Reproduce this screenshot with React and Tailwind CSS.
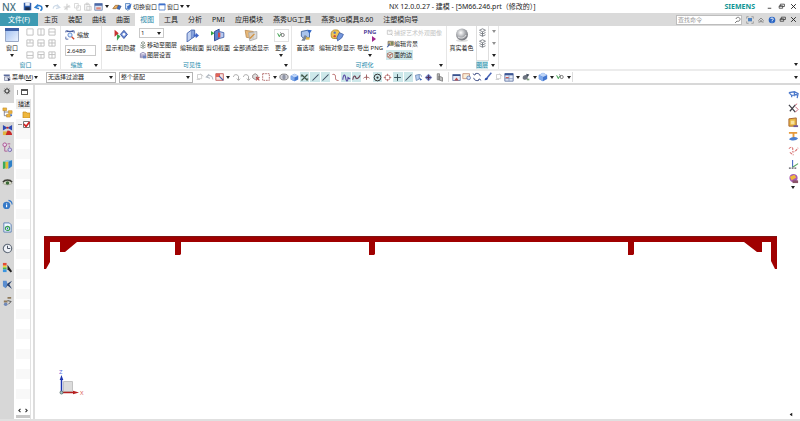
import clsx from "clsx";

// Small line/shape icons, all drawn on a 12x12 grid
const glyphs = {
  save: (
    <>
      <path d="M1 1h9l1 1v9H1z" fill="#2c5aa8" />
      <path d="M3 1h6v4H3z" fill="#e8eef8" />
      <path d="M3 7h6v4H3z" fill="#1d2c4a" />
    </>
  ),
  undo: <path d="M2 6.500C5 3 9.500 4 9.500 7.500c0 1.500-1 2.500-2 2.500M5 3 1.500 6.500 6 8" fill="none" stroke="#2f7fd0" strokeWidth="1.800" />,
  undoPale: <path d="M2 6C5 3 9 4 9.500 9M5 2.500 1.500 6 6 7.500" fill="none" stroke="#b5bcc4" strokeWidth="1.300" />,
  redoPale: <path d="M10 6.500C7 3 3 4 2.500 8M7 3l3.500 3.500L6 8" fill="none" stroke="#cfdbe8" strokeWidth="1.500" />,
  cut: <path d="M2 6h8M6 2v8M3 9l6-5" fill="none" stroke="#cfcfcf" strokeWidth="1.400" />,
  copy: <path d="M2 2h5v6H2zM5 5h5v6H5z" fill="#fff" stroke="#cfcfcf" />,
  paste: <path d="M2 3h7v8H2zM4 1.500h3v2H4zM5 6h6v5H5z" fill="#f5f5f5" stroke="#cacaca" />,
  table: (
    <>
      <path d="M1 2h10v9H1z" fill="#dce6f5" stroke="#6379a8" />
      <path d="M1 2h10v3H1z" fill="#4a69a8" />
      <path d="M3 7h6v3H3z" fill="#e08a7c" />
    </>
  ),
  eraser: (
    <>
      <path d="m1 8 3-4h4L5 8z" fill="#f0b060" stroke="#9d7038" />
      <path d="M6 8l2-4 3 1-2 4z" fill="#3e6ec2" stroke="#27406f" strokeWidth=".6" />
    </>
  ),
  switchWin: (
    <>
      <path d="M2 2h6v7H2z" fill="#dbe7f8" stroke="#4678b8" />
      <path d="m4 6 6-4-1 5-4 3z" fill="#3d70c6" />
      <path d="M2 9l3 2 3-2" fill="none" stroke="#4678b8" />
    </>
  ),
  win: (
    <>
      <path d="M1.500 1.500h9v9h-9z" fill="#fff" stroke="#4a78c8" strokeWidth="1.200" />
      <path d="M1 1h10v2.500H1z" fill="#3f70cc" />
    </>
  ),
  zoomFit: (
    <>
      <path d="M1 3V1h3M8 1h3v3M1 8v3h3" fill="none" stroke="#465a9c" />
      <path d="M2 1h8v1.500H2z" fill="#465a9c" />
      <circle cx="6" cy="6" r="2.500" fill="#dff0ff" stroke="#4d78c8" />
      <path d="m8 8 3 3" stroke="#d0452c" strokeWidth="1.600" />
    </>
  ),
  showHide: (
    <>
      <path d="M.5 1.500v6L4 4.500z" fill="#c93232" />
      <path d="M2.500 5v6l3-4z" fill="#39a050" />
      <path d="m8.500 2 3 3.500-3 3.500-3-3.500z" fill="#6f8fd8" stroke="#3b55a0" strokeWidth=".8" />
      <circle cx="8.500" cy="5.500" r="1.200" fill="#fff" />
    </>
  ),
  moveLayer: <path d="m3 3 3-2 3 2-3 2zM2 6l4 2 4-2M2 9l4 2 4-2M6 5v5" fill="none" stroke="#5d6e5e" />,
  layerSet: (
    <>
      <path d="M2 4l4-2 4 2v6H2z" fill="#e7e5f5" stroke="#71699d" />
      <path d="M2 6h8M2 8h8" stroke="#71699d" />
      <path d="M6 7h5v4H6z" fill="#6e83bf" />
    </>
  ),
  section: (
    <>
      <path d="M1 4l4-3v8l-4 3z" fill="#c2d2f2" stroke="#3c5da8" strokeWidth=".8" />
      <path d="M5 1h3v6L5 9" fill="#87a3dd" stroke="#3c5da8" strokeWidth=".8" />
      <path d="M7 5h2V3.500L12 6 9 8.500V7H7z" fill="#4166c8" />
    </>
  ),
  clip: (
    <>
      <path d="M3 3l4-2v8l-4 2z" fill="#5e80cf" stroke="#2d488f" strokeWidth=".8" />
      <path d="M7 3l4 1v4l-4 1z" fill="#b8caf0" stroke="#4766ad" strokeWidth=".8" />
      <path d="M0 2.500l3 2-3 2z" fill="#38a447" />
      <path d="M6 4h2v4H6z" fill="#d04848" />
    </>
  ),
  seeThru: (
    <>
      <path d="M1 2l7 1v6L2 8z" fill="#e8b878" stroke="#b98c54" strokeWidth=".7" />
      <path d="M4 4l7-1v6l-6 2z" fill="#d3d3d3" fillOpacity=".8" stroke="#a5a5a5" strokeWidth=".7" />
      <path d="m5 9 4-4" stroke="#d18f39" />
    </>
  ),
  glasses: (
    <>
      <path d="M2 4l2 4 1.500-3" fill="none" stroke="#3a9f4b" strokeWidth="1.200" />
      <circle cx="8" cy="6" r="1.900" fill="none" stroke="#666" />
      <path d="m5 3 2 2" stroke="#555" />
    </>
  ),
  prefs: (
    <>
      <path d="M2 3l5-1 2 2v4l-5 1-2-2z" fill="#a9c4ec" stroke="#45689f" strokeWidth=".8" />
      <path d="M7 1.500 11 2l-2 3z" fill="#2f66c6" />
      <path d="m5 6-3 5h3l2-4z" fill="#7b8794" />
      <path d="M6 8h3v2H6z" fill="#e2b440" />
    </>
  ),
  editDisp: (
    <>
      <path d="M1 5c0-3 3-4 6-3l2 3-3 4H3C1 9 1 7 1 5z" fill="#f0c552" stroke="#a98022" strokeWidth=".7" />
      <circle cx="4" cy="4" r="1" fill="#4a73c6" />
      <circle cx="4" cy="7" r="1" fill="#cf4a3a" />
      <path d="m8 4 3.500 1.500L10 8.500 6.500 11 6 8z" fill="#7396dc" stroke="#3e5fa7" strokeWidth=".7" />
    </>
  ),
  capture: <path d="M2 2h7v6H2zM7 7l3 3M4 4h3" fill="none" stroke="#b7b7b7" />,
  editBg: (
    <>
      <path d="M3 2h8v6H3z" fill="#c9b27d" stroke="#6b675c" />
      <path d="m1 11 4-6 1 1-3 5z" fill="#3b5da9" />
      <path d="M8 3h2v4H8z" fill="#567b4f" />
    </>
  ),
  faceEdge: (
    <>
      <path d="M2 4l4-2 4 2v5l-4 2-4-2z" fill="#dbeeee" stroke="#a35a4a" />
      <path d="m2 4 4 2 4-2M6 6v5" fill="none" stroke="#a35a4a" />
      <path d="m3 9 5-5" stroke="#c44b38" />
    </>
  ),
  layers: <path d="m6 1 4 2-4 2-4-2zM2 6l4 2 4-2M2 9l4 2 4-2M6 5v6" fill="none" stroke="#6c7178" strokeWidth="1.100" />,
  menu: (
    <>
      <path d="M1 2h8v2H1z" fill="#5a6b9d" />
      <path d="M2 5h7v5H2z" fill="#e0e4f0" stroke="#79809d" />
      <path d="m6 6 4 3-2 .5L7 11z" fill="#333c5d" />
    </>
  ),
  pale: <path d="M3 3h5v5H3zM2 9h4M6 2l4 3" fill="none" stroke="#c9c9c9" />,
  snapSel: (
    <>
      <path d="M1 2h9v8H1z" fill="#fbe3de" stroke="#bd5656" />
      <path d="M1 2h5v4H1z" fill="#e06458" />
      <path d="m5 5 5 5" stroke="#4663b4" strokeWidth="1.500" />
    </>
  ),
  hook: <path d="M3 6c0-3 4-4 6-1v5M7 8l2 2 2-2" fill="none" stroke="#a9a9a9" strokeWidth="1.200" />,
  pick: (
    <>
      <path d="m2 4 3-2 3 2v3L5 9 2 7z" fill="#dedede" stroke="#8a7c7c" />
      <path d="m6 6 4 4M10 6l-4 4" stroke="#b84848" strokeWidth="1.300" />
    </>
  ),
  marquee: <path d="M2 2h8v8H2z" fill="none" stroke="#a85a5a" strokeDasharray="2 1" />,
  disc: (
    <>
      <ellipse cx="6" cy="6" rx="5" ry="3.500" fill="#d0d0d8" stroke="#777" />
      <ellipse cx="6" cy="6" rx="2" ry="3" fill="#8e94a5" />
    </>
  ),
  cube: (
    <>
      <path d="m6 1 5 2.500v5L6 11 1 8.500v-5z" fill="#4276cf" />
      <path d="m6 1 5 2.500L6 6 1 3.500z" fill="#bed5f8" />
      <path d="M6 6v5L1 8.500v-5z" fill="#7ea8ea" />
    </>
  ),
  star: <path d="M2 2l4 4 4-4M2 10l4-4 4 4M1 4h4M7 8h4" fill="none" stroke="#3f5547" strokeWidth="1.500" />,
  line: <path d="m2 10 8-8" stroke="#38485d" strokeWidth="1.400" />,
  curve: <path d="M2 2c4-1 4 2 4 4s0 4 4 4" fill="none" stroke="#a84c4c" strokeWidth="1.200" />,
  wave: <path d="M1 9c1-8 3-8 4-2s3 4 3-1l3 2" fill="none" stroke="#584aa4" strokeWidth="1.500" />,
  wave2: <path d="M1 9c1-6 3-6 4-3s4 1 6-3" fill="none" stroke="#6d4456" strokeWidth="1.500" />,
  plusUp: <path d="M6 2v7M2 7c1-2 7-2 8 0" fill="none" stroke="#9a5757" strokeWidth="1.200" />,
  target: (
    <>
      <circle cx="6" cy="6" r="4.500" fill="none" stroke="#333" strokeWidth="1.300" />
      <circle cx="6" cy="6" r="1.500" fill="#333" />
    </>
  ),
  ring: (
    <>
      <circle cx="6" cy="6" r="3.500" fill="none" stroke="#b26464" />
      <path d="M6 1v3M6 8v3M1 6h3M8 6h3" stroke="#b26464" />
    </>
  ),
  plus: <path d="M6 1.500v9M1.500 6h9" stroke="#39525a" strokeWidth="1.300" />,
  faceSnap: (
    <>
      <path d="M2 3l5-1v6l-4 2z" fill="#bcd1f2" stroke="#5e7dac" />
      <path d="M7 6l4 3-3 1z" fill="#3a66b6" />
      <path d="M7 2c2 0 3 1 3 3" fill="none" stroke="#5e7dac" />
    </>
  ),
  diamond: (
    <>
      <path d="m6 1 5 5-5 5-5-5z" fill="#7280c0" />
      <path d="M6 3v6M3 6h6" stroke="#502c56" strokeWidth="1.300" />
    </>
  ),
  stack: <path d="M3 1h3v8H3zM5 4l5 2v5l-5-2z" fill="#c0c0c0" stroke="#737373" />,
  grid: (
    <>
      <path d="M1 2h10v8H1z" fill="#e6edf9" stroke="#596e9e" />
      <path d="M1 2h10v2H1z" fill="#38528f" />
      <path d="M3 10l3-4 3 4z" fill="#bb4f4f" />
    </>
  ),
  winZoom: (
    <>
      <path d="M1 2h8v6H1z" fill="#fbeed7" stroke="#c28b73" />
      <circle cx="8" cy="7" r="2.200" fill="#d7e5fb" stroke="#6076b0" />
    </>
  ),
  rotate: <path d="M10 5a4 4 0 0 0-7-2M2 7a4 4 0 0 0 7 2M1 2l2 1.500L5 2M11 10 9 8.500 7 10" fill="none" stroke="#4c5a8d" strokeWidth="1.200" />,
  brush: (
    <>
      <path d="M10 1 5 7" stroke="#4763b5" strokeWidth="1.800" />
      <path d="M2 10c0-3 2-4 4-3 0 2-1 3-4 3z" fill="#2d4ba5" />
    </>
  ),
  tableRed: (
    <>
      <path d="M1 2h10v9H1z" fill="#e6edf9" stroke="#596e9e" />
      <path d="M1 1.500h10v2.500H1z" fill="#3d5796" />
      <path d="M2 6h4v2H2z" fill="#d26058" />
      <path d="M6 4v7M1 8h10" stroke="#8b9cc4" />
    </>
  ),
  clock3d: (
    <>
      <path d="M2 7c0-3 3-4 6-3v4c-2 2-6 2-6-1z" fill="#6d7480" />
      <path d="M6 2l4 1-2 3z" fill="#3f4a5a" />
      <path d="M7 8h3v2H7z" fill="#7b9e7a" />
    </>
  ),
  gear: (
    <>
      <circle cx="6" cy="6" r="3" fill="none" stroke="#444" strokeWidth="1.700" />
      <path d="M6 1v2M6 9v2M1 6h2M9 6h2M2.500 2.500l1.300 1.300M8.200 8.200l1.300 1.300M9.500 2.500 8.200 3.800M3.800 8.200 2.500 9.500" stroke="#444" />
    </>
  ),
  partNav: (
    <>
      <path d="M1 1h4v3H1zM7 4h4v3H7zM5 8h4v3H5z" fill="#eeb63c" stroke="#bd8522" strokeWidth=".6" />
      <path d="M2.500 4v5.500H5M2.500 5.500H7" fill="none" stroke="#667" strokeWidth=".8" />
      <path d="M9 8h2v2H9z" fill="#4677c7" />
    </>
  ),
  asmNav: (
    <>
      <path d="m1 0 5 3-5 3zM11 0 6 3l5 3z" fill="#2b48b3" />
      <path d="M1 7h5v4H1z" fill="#e1b640" />
      <path d="M6 6c3 0 5 2 5 5H4z" fill="#c82828" />
      <path d="M5 2h2v2H5z" fill="#c82828" />
    </>
  ),
  constraint: (
    <>
      <circle cx="3" cy="3" r="2" fill="#ead7ee" stroke="#a8508e" />
      <circle cx="8.500" cy="8.500" r="2" fill="#d6d6f2" stroke="#7768b0" />
      <path d="M3 5v5h3M6 2h3M8 4v2" fill="none" stroke="#a8508e" strokeWidth=".9" />
    </>
  ),
  books: (
    <>
      <path d="m1 3 3-1v8l-3 1z" fill="#3caa59" />
      <path d="m4 3 3-1v8l-3 1z" fill="#e2bd36" />
      <path d="m7 2 4-1v7l-4 3z" fill="#2f80c8" />
      <path d="m1 3 4-2 6 0-4 2z" fill="#9cc8dc" />
    </>
  ),
  eye: (
    <>
      <path d="M1 7c2-4 8-4 10 0-3 2-7 2-10 0z" fill="#e3e6d4" stroke="#8c8c80" strokeWidth=".6" />
      <circle cx="6" cy="6.500" r="2" fill="#3c6a38" />
      <path d="M1 5.500c2-3 8-3 10 0" fill="none" stroke="#3d3d35" strokeWidth="1.600" />
    </>
  ),
  info: (
    <>
      <circle cx="5" cy="7" r="4" fill="#3579c8" />
      <path d="M5 6v3M5 4.500v.8" stroke="#fff" strokeWidth="1.300" />
      <path d="M7 1.500c2.500.5 4 2 4 4.500" fill="none" stroke="#3579c8" strokeWidth="1.200" />
    </>
  ),
  page: (
    <>
      <path d="M2 1h6l2 2v8H2z" fill="#eef5ff" stroke="#5a7fb4" />
      <circle cx="6" cy="7" r="2.300" fill="none" stroke="#399e52" strokeWidth="1.300" />
      <path d="M6 6v2" stroke="#2f6bbd" strokeWidth="1.200" />
    </>
  ),
  clock: (
    <>
      <circle cx="6" cy="6" r="4.600" fill="#eef1f6" stroke="#606a78" strokeWidth="1.200" />
      <path d="M6 3v3h3" fill="none" stroke="#3c4658" />
    </>
  ),
  palette: (
    <>
      <path d="M1 1h4v3H1z" fill="#e34b36" />
      <path d="M1 4h4v2H1z" fill="#f3d436" />
      <path d="M1 6h4v2H1z" fill="#46ba4b" />
      <path d="M1 8h4v3H1z" fill="#3a94df" />
      <path d="m6 3 5 7-1.500 1.500L6 8z" fill="#222" />
    </>
  ),
  tools: (
    <>
      <path d="M1 2h4l1 4-2 4-3-2z" fill="#5a8dd0" />
      <path d="m6 5 5-3-3 4 3 5-5-4-2 3z" fill="#29406b" />
    </>
  ),
  flow: (
    <>
      <path d="M6 1h4v2H6zM2 5h4v2H2z" fill="#8f7a5a" />
      <circle cx="4" cy="9" r="2" fill="#7089b8" />
      <path d="m6 5 4 1-3 3" fill="none" stroke="#4d4d4d" />
    </>
  ),
  viewA: <path d="M1 4l6-1 4 2-1 5M1 4l3 3 6-1M4 7v2M7 3v5" fill="none" stroke="#4c79cb" strokeWidth="1.400" />,
  viewB: (
    <>
      <path d="m1 2 7 8M8 2 2 9" stroke="#3f3f47" strokeWidth="1.300" />
      <path d="m8 4 3 3-3 3M8 2l2-1" fill="none" stroke="#c85c70" />
    </>
  ),
  viewC: (
    <>
      <path d="M1 2l8-1v9H1z" fill="#e8b643" stroke="#a5602c" />
      <path d="M3 4h4v4H3z" fill="#f8e2a0" />
      <path d="M6 9h5v2H6z" fill="#6d599e" />
    </>
  ),
  viewD: (
    <>
      <path d="M1 1h9v2H1zM5 3h2v5H5z" fill="#e59a3d" />
      <path d="M1 9c3-3 7-3 10-1-2 3-7 3-10 1z" fill="#4b7fd2" />
    </>
  ),
  viewE: <path d="M1 4c3-3 5-1 4 2S8 8 11 3M2 8l4 3" fill="none" stroke="#d97676" strokeWidth="1.200" strokeDasharray="3 1" />,
  viewF: (
    <>
      <path d="M5 1v8" stroke="#4b6cc8" strokeWidth="1.200" />
      <path d="m5 9 6-4" stroke="#55a45f" strokeWidth="1.200" />
      <path d="M1 10h9" stroke="#55555f" strokeWidth="1.300" strokeDasharray="2 1" />
    </>
  ),
  viewG: (
    <>
      <circle cx="6" cy="5.500" r="4.500" fill="#a75cb6" />
      <path d="M2 4l5-2 2 3-5 3z" fill="#efb93a" />
      <path d="M5 8h6v3H5z" fill="#8a5368" />
    </>
  ),
  screen: (
    <>
      <path d="M1 1h3M8 1h3M1 11h3M8 11h3M1 1v3M11 1v3M1 8v3M11 8v3" stroke="#888" />
      <path d="M3 3h6v5H3z" fill="#4e82be" />
    </>
  ),
  hat: <path d="m2 7 4-4 4 4M2 9h3V7h2v2h3" fill="none" stroke="#777" strokeWidth="1.200" />,
  help: (
    <>
      <circle cx="6" cy="6" r="5" fill="#2b66c4" />
      <path d="M4 4.500C4 2.500 8 2.500 8 4.500S6 6 6 7.500M6 8.500v1" fill="none" stroke="#fff" strokeWidth="1.400" />
    </>
  ),
  restore: <path d="M4 5V2h7v4H8M2 5h6v4H2zM2 5.500h6" fill="none" stroke="#333" strokeWidth="1.300" />,
  close: <path d="m2 2 8 8M10 2l-8 8" stroke="#222" strokeWidth="1.600" />,
  minimize: <path d="M3 9h6" stroke="#333" strokeWidth="1.500" />,
  search: <path d="M7 2a3 3 0 1 1-1 5.500L3 10.500M4.500 4.500A3 3 0 0 1 7 2" fill="none" stroke="#666" strokeWidth="1.300" />,
};

const Icon = ({ name, className = "size-[10px]" }) => (
  <svg viewBox="0 0 12 12" className={clsx("shrink-0", className)} aria-hidden="true">
    {glyphs[name]}
  </svg>
);

const Caret = ({ className }) => (
  <svg viewBox="0 0 4 3" className={clsx("h-[3px] w-[4px] shrink-0", className)} aria-hidden="true">
    <path d="M0 0h4L2 3z" fill="#222" />
  </svg>
);

const IconButton = ({ name, label, className = "w-[10px]", size }) => (
  <button aria-label={label || name} className={clsx("flex shrink-0 items-center justify-center", className)}>
    {name === "caret" ? <Caret /> : <Icon name={name} className={size} />}
  </button>
);

const TitleBar = () => (
  <header className="flex h-[13px] items-center">
    <div className="flex w-[389px] shrink-0 items-center">
      <span className="w-[22px] pl-[2px] text-[10px] leading-[12px] font-medium text-[#48717f]">NX</span>
      <IconButton name="save" label="保存" size="size-[9px]" />
      <IconButton name="undo" label="撤消" className="ml-px w-[11px]" />
      <IconButton name="caret" label="撤消列表" className="w-[6px]" />
      <IconButton name="redoPale" label="重做" className="w-[11px]" />
      <IconButton name="cut" label="剪切" className="ml-px w-[10px]" />
      <IconButton name="copy" label="复制" size="size-[9px]" />
      <IconButton name="paste" label="粘贴" size="size-[9px]" />
      <IconButton name="table" label="表格" className="ml-px w-[10px]" size="size-[9px]" />
      <IconButton name="caret" label="表格列表" className="w-[7px]" />
      <IconButton name="eraser" label="橡皮" className="ml-px w-[12px]" />
      <button className="flex items-center">
        <Icon name="switchWin" className="ml-px size-[9px]" />
        切换窗口
      </button>
      <button className="ml-px flex items-center">
        <Icon name="win" className="mr-px size-[8px]" />
        窗口
        <Caret className="ml-px" />
      </button>
      <IconButton name="caret" label="自定义" className="w-[8px]" />
    </div>
    <h1 className="text-[7px] whitespace-nowrap">NX 12.0.0.27 - 建模 - [5M66.246.prt（修改的）]</h1>
    <div className="ml-auto flex items-center">
      <span className="mr-[8px] font-['Noto_Sans'] text-[7px] font-bold text-[#0e9494]">SIEMENS</span>
      <IconButton name="minimize" label="最小化" className="w-[12px]" size="size-[7px]" />
      <IconButton name="restore" label="还原" className="w-[12px]" size="size-[7px]" />
      <IconButton name="close" label="关闭" className="w-[13px]" size="size-[7px]" />
    </div>
  </header>
);

const tabs = ["主页", "装配", "曲线", "曲面", "视图", "工具", "分析", "PMI", "应用模块", "燕秀UG工具", "燕秀UG模具8.60", "注塑模向导"];

const TabBar = () => (
  <nav className="flex h-[13px] items-stretch bg-[#dadada] text-[7px]">
    <button className="mr-px w-[38px] bg-[#3d9ab2] text-white">文件(F)</button>
    {tabs.map((tab) => (
      <button
        key={tab}
        className={clsx("px-[5px] whitespace-nowrap", tab === "视图" && "bg-white text-[#1e86a6]")}
      >
        {tab}
      </button>
    ))}
    <div className="ml-auto flex items-center">
      <label className="mr-[3px] flex h-[10px] w-[66px] items-center border border-[#bdbdbd] bg-white">
        <input aria-label="查找命令" placeholder="查找命令" className="w-full min-w-0 pl-px text-[6px] placeholder:text-[#999]" />
        <Icon name="search" className="size-[8px]" />
      </label>
      <IconButton name="screen" label="全屏" size="size-[8px]" />
      <IconButton name="hat" label="最小化功能区" className="w-[12px]" size="size-[8px]" />
      <IconButton name="help" label="帮助" size="size-[8px]" />
      <IconButton name="restore" label="还原窗口" size="size-[7px]" />
      <IconButton name="close" label="关闭窗口" className="w-[13px]" size="size-[7px]" />
    </div>
  </nav>
);

const Group = ({ label, className, children }) => (
  <section className={clsx("flex shrink-0 flex-col border-r border-[#e6e6e6]", className)}>
    <div className="flex h-[35px]">{children}</div>
    <div className="relative flex h-[8px] items-center justify-center pr-[9px] text-[#2389aa]">
      {label}
      <Caret className="absolute right-[3px]" />
    </div>
  </section>
);

const BigButton = ({ label, className, caret, children }) => (
  <button className={clsx("flex shrink-0 flex-col items-center pt-[2px] whitespace-nowrap", className)}>
    <span className="mb-[2px] flex h-[14px] items-center justify-center">{children}</span>
    <span>{label}</span>
    {caret && <Caret className="mt-[2px]" />}
  </button>
);

const layouts = ["", "M4.500 1v7", "M1 4.500h7", "M1 4.500h7M4.500 1v3", "M1 4.500h7M4.500 4v4", "M1 4.500h7M4.500 1v7", "M1 5h7", "M1 4h7M4.500 4v4", "M1 4h7M4.500 1v7"];

const Ribbon = () => (
  <div className="flex h-[45px] border-b-2 border-[#ececec]">
    <Group label="窗口" className="w-[61px]">
      <BigButton label="窗口" caret className="w-[24px]">
        <svg viewBox="0 0 14 14" className="size-[14px]">
          <defs>
            <linearGradient id="pane" x1="0" y1="0" x2="1" y2="1">
              <stop offset="0" stopColor="#9dbdf0" />
              <stop offset="1" stopColor="#eef4ff" />
            </linearGradient>
          </defs>
          <path d="M.5.5h13v13H.5z" fill="url(#pane)" stroke="#9aa9c6" />
          <path d="M0 0h14v3H0z" fill="#3d5fa6" />
        </svg>
      </BigButton>
      <div className="grid w-[33px] grid-cols-3 items-center justify-items-center">
        {layouts.map((d, i) => (
          <button key={i} aria-label={`布局 ${i + 1}`}>
            <svg viewBox="0 0 9 9" className="size-[8px]">
              <path d={`M1 1h7v7H1z${d}`} fill="none" stroke="#bcbcbc" />
            </svg>
          </button>
        ))}
      </div>
    </Group>

    <Group label="缩放" className="w-[41px]">
      <div className="flex flex-col gap-[5px] pt-[4px] pl-[4px]">
        <button className="flex items-center gap-[2px]">
          <Icon name="zoomFit" />
          缩放
        </button>
        <input aria-label="缩放" defaultValue="2.6489" className="h-[11px] w-[31px] border border-[#c9c9c9] pl-px" />
      </div>
    </Group>

    <Group label="可见性" className="w-[190px]">
      <BigButton label="显示和隐藏" className="w-[37px]">
        <Icon name="showHide" className="size-[14px]" />
      </BigButton>
      <div className="w-[40px] pt-[2px]">
        <div className="relative mb-[3px] flex w-[25px] items-center">
          <select aria-label="工作图层" className="h-[10px] w-full appearance-none border border-[#c9c9c9] bg-white pl-px">
            <option>1</option>
          </select>
          <Caret className="absolute right-[3px]" />
        </div>
        <button className="mb-[2px] flex items-center whitespace-nowrap">
          <Icon name="moveLayer" className="size-[8px]" />
          移动至图层
        </button>
        <button className="flex items-center whitespace-nowrap">
          <Icon name="layerSet" className="size-[8px]" />
          图层设置
        </button>
      </div>
      <BigButton label="编辑截面" className="w-[26px]">
        <Icon name="section" className="size-[13px]" />
      </BigButton>
      <BigButton label="剪切截面" className="w-[26px]">
        <Icon name="clip" className="size-[14px]" />
      </BigButton>
      <BigButton label="全部通透显示" className="w-[40px]">
        <Icon name="seeThru" className="size-[14px]" />
      </BigButton>
      <BigButton label="更多" caret className="w-[20px]">
        <span className="flex h-[13px] w-[15px] items-center justify-center border border-[#e2e2e2]">
          <Icon name="glasses" />
        </span>
      </BigButton>
    </Group>

    <Group label="可视化" className="w-[155px]">
      <BigButton label="首选项" className="w-[27px]">
        <Icon name="prefs" className="size-[14px]" />
      </BigButton>
      <BigButton label="编辑对象显示" className="w-[36px]">
        <Icon name="editDisp" className="size-[14px]" />
      </BigButton>
      <BigButton label="导出 PNG" caret className="w-[30px]">
        <span className="flex flex-col items-end text-[6px] leading-[7px] font-bold text-[#54449a]">
          PNG
          <svg viewBox="0 0 4 6" className="h-[6px] w-[4px]">
            <path d="M0 0v6l4-3z" fill="#a0288c" />
          </svg>
        </span>
      </BigButton>
      <div className="flex flex-col items-start gap-[2px] pt-[2px] pl-px whitespace-nowrap">
        <button disabled className="flex h-[9px] items-center text-[#c4c4c4]">
          <Icon name="capture" className="size-[8px]" />
          捕捉艺术外观图像
        </button>
        <button className="flex h-[9px] items-center">
          <Icon name="editBg" className="size-[8px]" />
          编辑背景
        </button>
        <button className="flex h-[10px] items-center bg-[#cfe8ea] pr-px">
          <Icon name="faceEdge" className="size-[8px]" />
          面的边
        </button>
      </div>
    </Group>

    <section className="flex w-[52px] shrink-0 border-r border-[#e6e6e6]">
      <BigButton label="真实着色" className="w-[29px]">
        <svg viewBox="0 0 14 14" className="size-[14px]">
          <defs>
            <radialGradient id="ball" cx=".4" cy=".35" r=".65">
              <stop offset="0" stopColor="#fff" />
              <stop offset=".5" stopColor="#b4b6ba" />
              <stop offset="1" stopColor="#74767c" />
            </radialGradient>
          </defs>
          <ellipse cx="7" cy="12.500" rx="6" ry="1.300" fill="#dedede" />
          <circle cx="7" cy="6.500" r="6" fill="url(#ball)" />
          <path d="M3 9c3 2 7 1 8-2" fill="none" stroke="#e8e8ea" />
        </svg>
      </BigButton>
      <div className="flex flex-col">
        <div className="flex h-[35px]">
          <div className="flex w-[13px] flex-col items-center gap-[2px] border border-t-0 border-[#dedede] pt-[2px]">
            <IconButton name="layers" label="图层复制" size="size-[9px]" />
            <IconButton name="layers" label="图层移动" size="size-[9px]" />
          </div>
          <div className="flex w-[9px] flex-col items-center justify-around">
            <Caret className="opacity-50" />
            <Caret className="opacity-50" />
            <Caret />
          </div>
        </div>
        <div className="flex h-[8px] items-center text-[#2389aa]">
          <span className="bg-[#d3ecee]">图层</span>
          <Caret className="ml-[3px]" />
        </div>
      </div>
    </section>
    <Caret className="mt-auto mr-[2px] mb-[3px] ml-auto" />
  </div>
);

const FilterSelect = ({ label, value, className }) => (
  <div className={clsx("relative flex shrink-0 items-center", className)}>
    <select aria-label={label} className="h-[11px] w-full appearance-none border border-[#b4b4b4] bg-white pl-px">
      <option>{value}</option>
    </select>
    <Caret className="absolute right-[3px]" />
  </div>
);

const snapTools = [
  { icon: "star", on: true },
  { icon: "line", on: true },
  { icon: "line", on: true },
  { icon: "curve" },
  { icon: "wave", on: true },
  { icon: "wave2", on: true },
  { icon: "plusUp" },
  { icon: "target", on: true },
  { icon: "ring" },
  { icon: "plus", on: true },
  { icon: "line", on: true },
  { icon: "faceSnap" },
  { icon: "diamond" },
  { icon: "stack" },
];

const dropTools = ["tableRed", "clock3d", "cube", "glasses"];

const SelectionBar = () => (
  <div className="flex h-[14px] items-center border-b-2 border-[#d8d8d8]">
    <button className="mr-[6px] ml-[3px] flex w-[37px] shrink-0 items-center whitespace-nowrap">
      <Icon name="menu" className="size-[9px]" />
      菜单(<u>M</u>)
      <Caret className="ml-px" />
    </button>
    <FilterSelect label="选择过滤器" value="无选择过滤器" className="mr-[3px] w-[70px]" />
    <FilterSelect label="选择范围" value="整个装配" className="mr-[2px] w-[74px]" />
    <IconButton name="pale" label="类型" />
    <IconButton name="undoPale" label="返回" />
    <IconButton name="snapSel" label="选择" />
    <IconButton name="caret" label="选择列表" className="w-[6px]" />
    <IconButton name="hook" label="向上" />
    <IconButton name="hook" label="向下" />
    <IconButton name="pick" label="取消选择" />
    <IconButton name="marquee" label="矩形" />
    <IconButton name="caret" label="矩形列表" className="w-[7px]" />
    <IconButton name="disc" label="高亮" className="w-[11px]" />
    <IconButton name="cube" label="实体" size="size-[9px]" />
    <div className="mr-[3px] ml-px flex h-[10px] w-[145px] shrink-0 items-stretch">
      {snapTools.map((tool, i) => (
        <button
          key={i}
          aria-label={`捕捉点 ${i + 1}`}
          className={clsx("flex flex-1 items-center justify-center border-r border-white", tool.on && "bg-[#cde8ea]")}
        >
          <Icon name={tool.icon} className="size-[9px]" />
        </button>
      ))}
    </div>
    <div className="flex h-[10px] shrink-0 items-center border-x border-[#dedede] pl-[2px]">
      <IconButton name="grid" label="适合窗口" size="size-[9px]" />
      <IconButton name="winZoom" label="缩放窗口" className="w-[11px]" />
      <IconButton name="rotate" label="旋转" />
      <IconButton name="brush" label="着色" className="w-[11px]" />
      <IconButton name="pale" label="平移" className="w-[11px]" />
      {dropTools.map((tool) => (
        <button key={tool} aria-label={tool} className="flex w-[17px] items-center gap-[2px]">
          <Icon name={tool} />
          <Caret />
        </button>
      ))}
    </div>
    <Caret className="mr-[2px] ml-auto" />
  </div>
);

const railItems = [
  { icon: "gear", h: "h-[18px]", size: "size-[8px]" },
  { icon: "partNav", h: "h-[19px]", active: true },
  { icon: "asmNav", h: "h-[16px]" },
  { icon: "constraint", h: "h-[18px]" },
  { icon: "books", h: "h-[17px]" },
  { icon: "eye", h: "h-[19px]" },
  { icon: "info", h: "h-[24px]" },
  { icon: "page", h: "h-[22px]" },
  { icon: "clock", h: "h-[21px]" },
  { icon: "palette", h: "h-[17px]" },
  { icon: "tools", h: "h-[17px]" },
  { icon: "flow", h: "h-[17px]" },
];

const ResourceBar = () => (
  <aside className="flex w-[14px] shrink-0 flex-col bg-[#d7d7d7]">
    {railItems.map(({ icon, h, active, size = "size-[11px]" }) => (
      <button
        key={icon}
        aria-label={icon}
        className={clsx("flex shrink-0 items-center justify-center", h, active && "bg-white", icon === "gear" && "pb-[7px]")}
      >
        <Icon name={icon} className={size} />
      </button>
    ))}
  </aside>
);

const Navigator = () => (
  <aside className="flex w-[21px] shrink-0 flex-col border-r-2 border-[#dcdcdc]">
    <div className="flex h-[14px] items-center gap-[3px] pl-[3px]">
      <span className="h-[5px] border-l border-[#aaa]" />
      <span className="h-[6px] w-[7px] border border-t-2 border-[#555]" />
    </div>
    <div className="mr-[2px] ml-[2px] flex flex-1 flex-col border-r border-[#e2e2e2]">
      <div className="h-[10px] overflow-hidden bg-[#ececec] pl-[2px] leading-[10px] whitespace-nowrap">描述</div>
      <div className="flex h-[10px] items-center justify-end">
        <svg viewBox="0 0 8 7" className="h-[7px] w-[8px]">
          <path d="M1 1h3l1 1h3v5H1z" fill="#efb73d" stroke="#c48a21" strokeWidth=".7" />
        </svg>
      </div>
      <label className="flex h-[10px] items-center justify-between bg-[#f7f7f7] pl-[2px]">
        <span className="w-[4px] border-t border-[#999]" />
        <input
          type="checkbox"
          defaultChecked
          aria-label="部件"
          className="absolute size-[7px] opacity-0"
        />
        <svg viewBox="0 0 7 7" className="size-[7px]">
          <path d="M.5.5h6v6h-6z" fill="#fff" stroke="#777" />
          <path d="m1 3 2 2.500L6.500 1" fill="none" stroke="#d02020" strokeWidth="1.700" />
        </svg>
      </label>
      {Array.from({ length: 27 }, (_, i) => (
        <div key={i} className="h-[10px] odd:bg-white even:bg-[#f8f8f8]" />
      ))}
      <div className="mt-auto flex h-[10px] items-center justify-center">
        <svg viewBox="0 0 14 6" className="h-[5px] w-[12px]">
          <path d="M4 1 2 3l2 2M10 1l2 2-2 2" fill="none" stroke="#333" strokeWidth="1.300" />
        </svg>
      </div>
      <div className="mb-px h-[3px] bg-[#c8c8c8]" />
    </div>
  </aside>
);

// Side view of the part plus the view triad
const Viewport = () => (
  <svg viewBox="0 0 751 334" preserveAspectRatio="xMinYMin meet" className="min-w-0 flex-1">
    <path
      d="M9 151h733v33h-2l-4-8v-19h-9v10h-5l-13-10H599v12l-1 1h-5v-13H340v12l-1 1h-5v-13H146v12l-1 1h-5v-13H42l-12 10h-5v-10H15v20l-4 7H9z"
      fill="#a00000"
    />
    <path d="M9 151.500h733" stroke="#7d1414" />
    <path d="M28.500 296.500h9v10h-9z" fill="#dcdcdc" stroke="#c2c2c2" />
    <path d="M26.500 307v-13" stroke="#1c36b0" strokeWidth="1.500" />
    <path d="m26.500 290 1.800 5h-3.600z" fill="#1c36b0" />
    <path d="M27 307.500h12" stroke="#b51f1f" strokeWidth="1.500" />
    <path d="m44 307.500-6-1.700v3.400z" fill="#b51f1f" />
    <circle cx="26.500" cy="307.500" r="1.500" fill="#a8c4c4" stroke="#4e6868" strokeWidth=".8" />
    <text x="24" y="289" fontSize="6" fill="#5b6cdc">Z</text>
    <text x="45" y="310" fontSize="6" fill="#dc6060">X</text>
  </svg>
);

const viewTools = ["viewA", "viewB", "viewC", "viewD", "viewE", "viewF", "viewG"];

const ViewTools = () => (
  <aside className="flex w-[14px] shrink-0 flex-col items-center pt-[2px]">
    {viewTools.map((tool) => (
      <IconButton key={tool} name={tool} className="h-[14px] w-[12px]" size="size-[11px]" />
    ))}
    <Caret className="mt-px" />
    <Caret className="mt-auto mr-[4px] mb-[3px] rotate-90" />
  </aside>
);

export default function App() {
  return (
    <div className="flex min-h-screen flex-col overflow-hidden bg-white font-['Noto_Sans','Noto_Sans_CJK_SC',sans-serif] text-[6px] leading-[8px] text-[#222]">
      <TitleBar />
      <TabBar />
      <Ribbon />
      <SelectionBar />
      <main className="flex flex-1 border-b-2 border-[#e0e0e0]">
        <ResourceBar />
        <Navigator />
        <Viewport />
        <ViewTools />
      </main>
    </div>
  );
}
